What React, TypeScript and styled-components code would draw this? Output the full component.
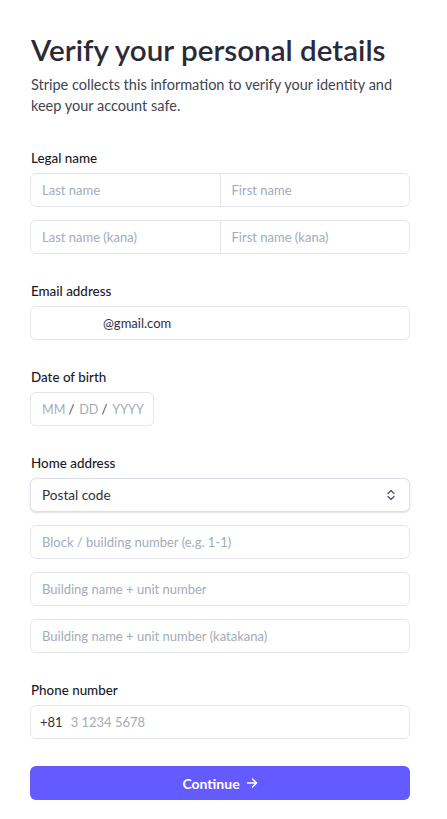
import React from "react";
import styled, { createGlobalStyle } from "styled-components";

const Global = createGlobalStyle`
  html, body { margin: 0; padding: 0; background: #ffffff; }
  body { font-family: Lato, "Noto Sans", sans-serif; color: #30313d; }
  * { box-sizing: border-box; }
`;

const Page = styled.div`
  width: 447px;
  padding: 31px 37px 20px 30px;
  display: flex;
  flex-direction: column;
`;

const Title = styled.h1`
  margin: 0;
  font-size: 29.6px;
  line-height: 38px;
  font-weight: 600;
  color: #2a2b37;
  padding-left: 1px;
  white-space: nowrap;
`;

const Subtitle = styled.p`
  margin: 5px 0 0;
  font-size: 14.5px;
  line-height: 21px;
  color: #414552;
  padding-left: 1px;
`;

const Form = styled.div`
  margin-top: 32px;
  display: flex;
  flex-direction: column;
  gap: 27px;
`;

const Section = styled.div`
  display: flex;
  flex-direction: column;
`;

const Label = styled.div`
  font-size: 13.4px;
  line-height: 20px;
  font-weight: 500;
  color: #1a1b25;
  margin-bottom: 5px;
  padding-left: 1px;
`;

const Stack = styled.div`
  display: flex;
  flex-direction: column;
  gap: 13px;
`;

const Box = styled.div<{ $w?: number; $shadow?: boolean }>`
  height: 34px;
  width: ${(p) => (p.$w ? `${p.$w}px` : "100%")};
  border: 1px solid ${(p) => (p.$shadow ? "#dcdfe5" : "#e3e5ea")};
  border-radius: 6px;
  background: #fff;
  display: flex;
  align-items: center;
  overflow: hidden;
  box-shadow: ${(p) => (p.$shadow ? "0 1px 2px rgba(0,0,0,0.12)" : "none")};
`;

const Cell = styled.div<{ $divider?: boolean; $pad?: number }>`
  flex: 1;
  height: 100%;
  display: flex;
  align-items: center;
  padding: 0 ${(p) => p.$pad ?? 11}px;
  border-left: ${(p) => (p.$divider ? "1px solid #e3e5ea" : "none")};
`;

const Placeholder = styled.span`
  font-size: 13px;
  color: #a3acb9;
  white-space: nowrap;
`;

const DatePart = styled(Placeholder)`
  font-size: 12.6px;
`;

const Value = styled.span`
  font-size: 13px;
  color: #30313d;
  white-space: nowrap;
`;

const Redacted = styled.span`
  display: inline-block;
  width: 61px;
`;

const Slash = styled.span`
  font-size: 13px;
  color: #414552;
  margin: 0 5px 0 3px;
`;

const SelectText = styled.span`
  flex: 1;
  font-size: 13.6px;
  color: #30313d;
`;

const Chevron = styled.svg`
  width: 10px;
  height: 12px;
  margin-right: 2px;
`;

const Prefix = styled.span`
  font-size: 13px;
  color: #30313d;
  margin-right: 8px;
`;

const Button = styled.button`
  margin-top: 27px;
  height: 34px;
  width: 100%;
  border: none;
  border-radius: 6px;
  background: #635bff;
  color: #fff;
  font-family: inherit;
  font-size: 14px;
  font-weight: 700;
  display: flex;
  align-items: center;
  justify-content: center;
  gap: 6px;
`;

const Field = ({ text }: { text: string }) => (
  <Box>
    <Cell>
      <Placeholder>{text}</Placeholder>
    </Cell>
  </Box>
);

const Split = ({ a, b }: { a: string; b: string }) => (
  <Box>
    <Cell>
      <Placeholder>{a}</Placeholder>
    </Cell>
    <Cell $divider>
      <Placeholder>{b}</Placeholder>
    </Cell>
  </Box>
);

export default function App() {
  return (
    <Page>
      <Global />
      <Title>Verify your personal details</Title>
      <Subtitle>
        Stripe collects this information to verify your identity and keep your account safe.
      </Subtitle>
      <Form>
        <Section>
          <Label>Legal name</Label>
          <Stack>
            <Split a="Last name" b="First name" />
            <Split a="Last name (kana)" b="First name (kana)" />
          </Stack>
        </Section>
        <Section>
          <Label>Email address</Label>
          <Box>
            <Cell>
              <Redacted />
              <Value>@gmail.com</Value>
            </Cell>
          </Box>
        </Section>
        <Section>
          <Label>Date of birth</Label>
          <Box $w={124}>
            <Cell>
              <DatePart>MM</DatePart>
              <Slash>/</Slash>
              <DatePart>DD</DatePart>
              <Slash>/</Slash>
              <DatePart>YYYY</DatePart>
            </Cell>
          </Box>
        </Section>
        <Section>
          <Label>Home address</Label>
          <Stack>
            <Box $shadow>
              <Cell>
                <SelectText>Postal code</SelectText>
                <Chevron viewBox="0 0 10 12" fill="none" stroke="#4f566b" strokeWidth="1.3" strokeLinecap="round" strokeLinejoin="round">
                  <path d="M2 4.5 L5 1.5 L8 4.5" />
                  <path d="M2 7.5 L5 10.5 L8 7.5" />
                </Chevron>
              </Cell>
            </Box>
            <Field text="Block / building number (e.g. 1-1)" />
            <Field text="Building name + unit number" />
            <Field text="Building name + unit number (katakana)" />
          </Stack>
        </Section>
        <Section>
          <Label>Phone number</Label>
          <Box>
            <Cell $pad={9}>
              <Prefix>+81</Prefix>
              <Placeholder>3 1234 5678</Placeholder>
            </Cell>
          </Box>
        </Section>
      </Form>
      <Button>
        Continue
        <svg width="12" height="12" viewBox="0 0 12 12" fill="none" stroke="#fff" strokeWidth="1.4" strokeLinecap="round" strokeLinejoin="round">
          <path d="M1.5 6 H10.5" />
          <path d="M6.5 2 L10.5 6 L6.5 10" />
        </svg>
      </Button>
    </Page>
  );
}
